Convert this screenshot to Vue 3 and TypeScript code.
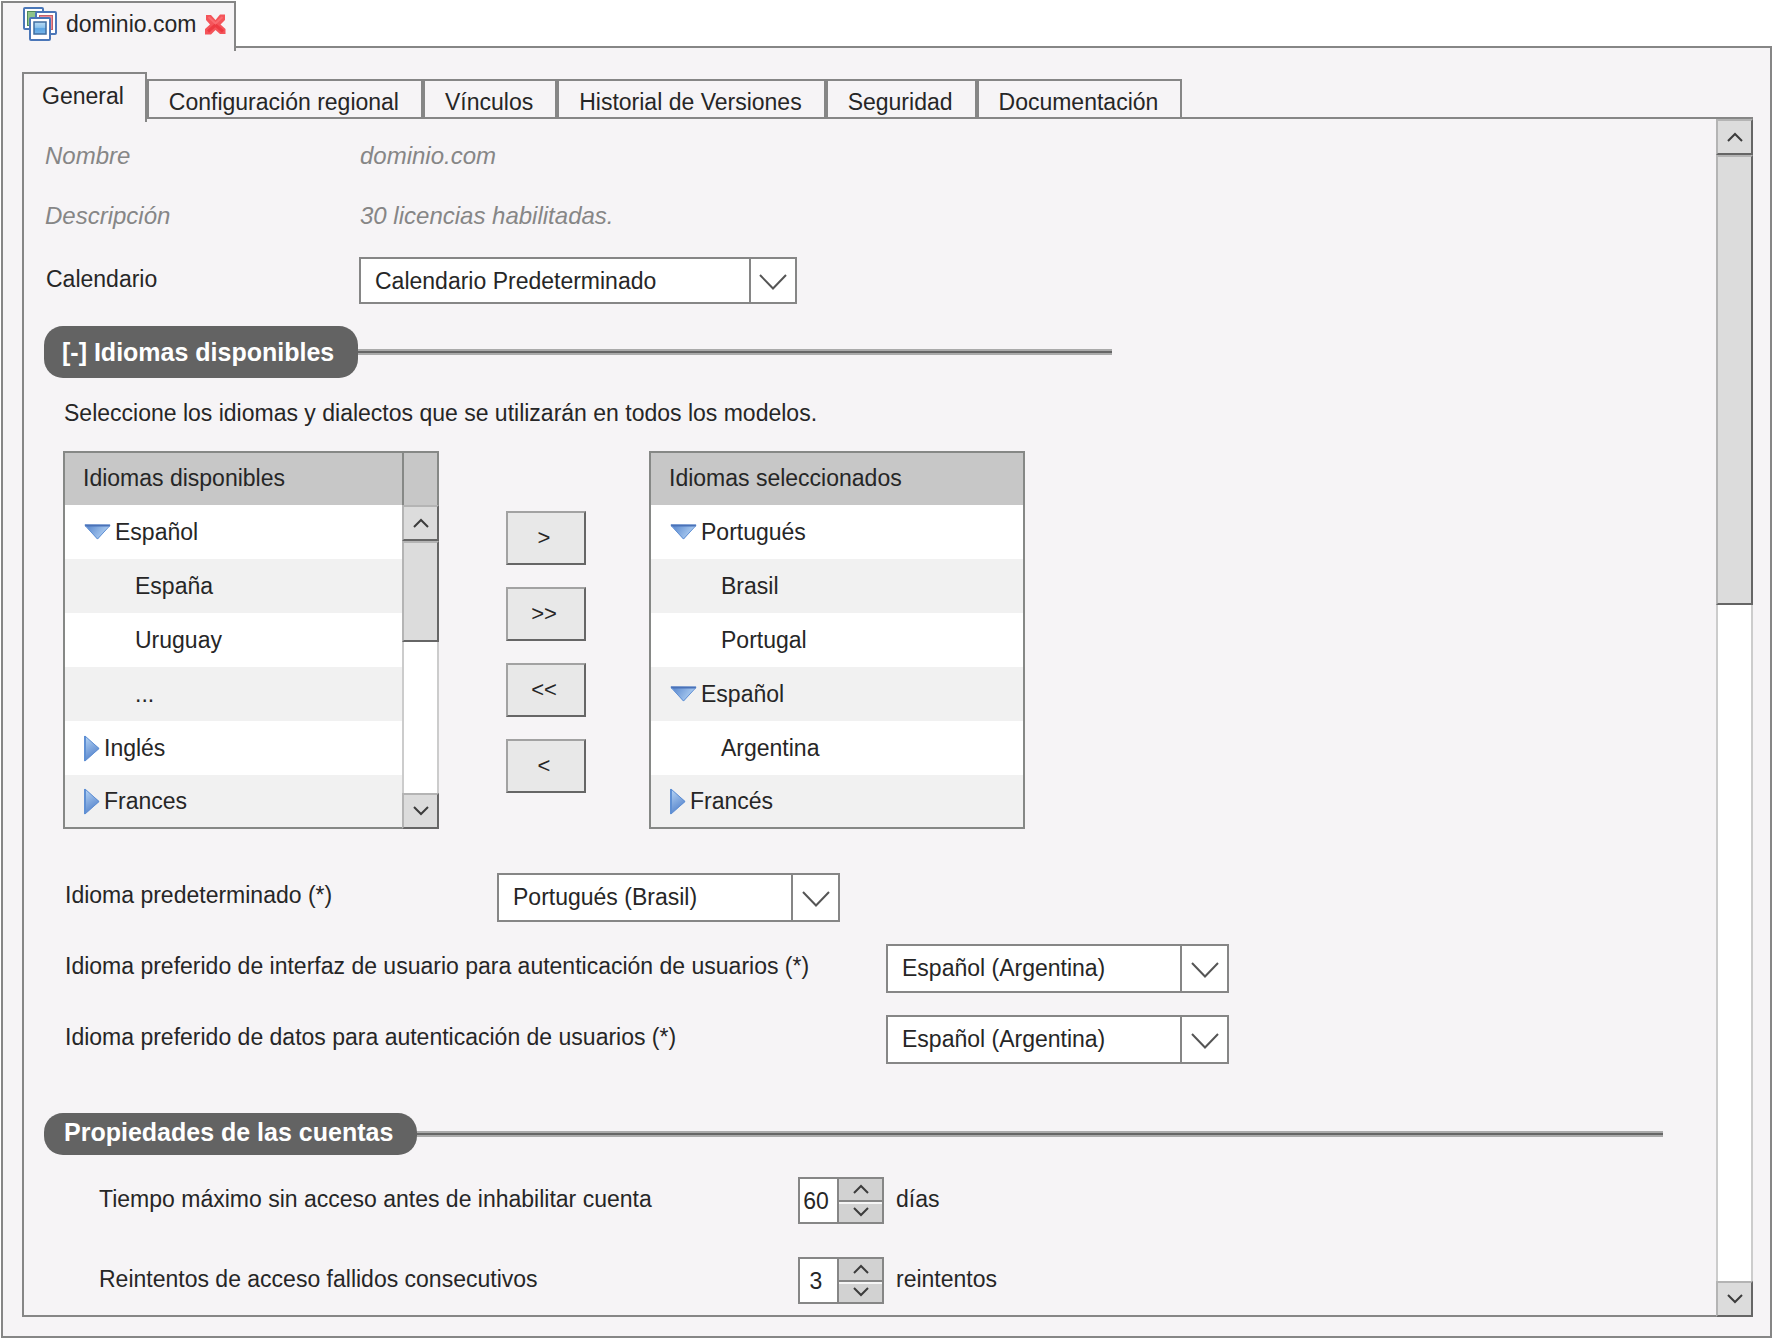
<script setup lang="ts">
import { ref } from 'vue'

interface LanguageRow {
  label: string
  kind: 'open' | 'closed' | 'child'
}

const tabs = [
  'General',
  'Configuración regional',
  'Vínculos',
  'Historial de Versiones',
  'Seguridad',
  'Documentación',
]
const activeTab = ref('General')

const available: LanguageRow[] = [
  { label: 'Español', kind: 'open' },
  { label: 'España', kind: 'child' },
  { label: 'Uruguay', kind: 'child' },
  { label: '...', kind: 'child' },
  { label: 'Inglés', kind: 'closed' },
  { label: 'Frances', kind: 'closed' },
]
const selected: LanguageRow[] = [
  { label: 'Portugués', kind: 'open' },
  { label: 'Brasil', kind: 'child' },
  { label: 'Portugal', kind: 'child' },
  { label: 'Español', kind: 'open' },
  { label: 'Argentina', kind: 'child' },
  { label: 'Francés', kind: 'closed' },
]
const lists = [
  { title: 'Idiomas disponibles', rows: available, scroll: true },
  { title: 'Idiomas seleccionados', rows: selected, scroll: false },
]
const moves = ['>', '>>', '<<', '<']

const languageFields = [
  { id: 'lang-default', label: 'Idioma predeterminado (*)', value: 'Portugués (Brasil)', wide: false },
  {
    id: 'lang-ui',
    label: 'Idioma preferido de interfaz de usuario para autenticación de usuarios (*)',
    value: 'Español (Argentina)',
    wide: true,
  },
  {
    id: 'lang-data',
    label: 'Idioma preferido de datos para autenticación de usuarios (*)',
    value: 'Español (Argentina)',
    wide: true,
  },
]

const limits = ref([
  { id: 'max-days', label: 'Tiempo máximo sin acceso antes de inhabilitar cuenta', value: 60, unit: 'días' },
  { id: 'max-tries', label: 'Reintentos de acceso fallidos consecutivos', value: 3, unit: 'reintentos' },
])
</script>

<template>
  <div class="window">
    <svg class="defs" width="0" height="0" aria-hidden="true">
      <defs>
        <linearGradient id="tri-down" x1="0" y1="0" x2="1" y2="0.4">
          <stop offset="0" stop-color="#4f7fca" />
          <stop offset="1" stop-color="#b4d3f4" />
        </linearGradient>
        <linearGradient id="tri-right" x1="0.2" y1="0" x2="0.6" y2="1">
          <stop offset="0" stop-color="#b4d3f4" />
          <stop offset="1" stop-color="#4c7cc8" />
        </linearGradient>
        <linearGradient id="pane-blue" x1="0" y1="0" x2="0" y2="1">
          <stop offset="0" stop-color="#b9dcf4" />
          <stop offset="0.45" stop-color="#8cc4ee" />
          <stop offset="0.55" stop-color="#5aa4e2" />
          <stop offset="1" stop-color="#78b6ea" />
        </linearGradient>
      </defs>
    </svg>

    <header class="doc-strip">
      <div class="doc-tab">
        <svg width="34" height="34" viewBox="0 0 34 34" aria-hidden="true">
          <rect x="1" y="1" width="19" height="21" rx="1" fill="#fff" stroke="#4a76b8" stroke-width="2" />
          <rect x="4.500" y="4.500" width="13" height="14" fill="#8fc48a" stroke="#4f8a5a" />
          <rect x="13" y="5" width="20" height="22" rx="1" fill="#fff" stroke="#4a76b8" stroke-width="2" />
          <rect x="16.500" y="8.500" width="13" height="14" fill="#f08a90" stroke="#c0606c" />
          <rect x="7" y="11" width="20" height="22" rx="1" fill="#fff" stroke="#4a76b8" stroke-width="2" />
          <rect x="11" y="15" width="12" height="12" fill="url(#pane-blue)" stroke="#3f6ea0" stroke-width="1.500" />
        </svg>
        <span>dominio.com</span>
        <button class="close" type="button" aria-label="Cerrar">
          <svg width="21" height="21" viewBox="0 0 21 21" aria-hidden="true">
            <path
              d="M1 1H6L10.500 6 15 .5H20V6L15.500 10.500 20.500 15V20H15L10.500 16 6 20.500H0V15L5 10.500 1 6Z"
              fill="#f4545a"
            />
            <path d="M3 17.500 10.500 11 18 17.500" fill="none" stroke="#ee3a42" stroke-width="3" />
            <path d="M3.500 3 10.500 9.500 17.500 3" fill="none" stroke="#fa6b70" stroke-width="2" />
          </svg>
        </button>
      </div>
    </header>

    <main class="frame">
      <nav class="tabs">
        <button
          v-for="tab in tabs"
          :key="tab"
          type="button"
          class="tab"
          :class="{ active: tab === activeTab }"
          @click="activeTab = tab"
        >
          {{ tab }}
        </button>
      </nav>

      <div class="panel">
        <div class="content">
          <dl class="facts">
            <dt>Nombre</dt>
            <dd>dominio.com</dd>
            <dt>Descripción</dt>
            <dd>30 licencias habilitadas.</dd>
          </dl>

          <div class="field calendar">
            <label for="calendar">Calendario</label>
            <div class="combo">
              <select id="calendar">
                <option>Calendario Predeterminado</option>
              </select>
              <span class="caret">
                <svg width="28" height="16" viewBox="0 0 28 16"><path d="M1 1 14 14.500 27 1" /></svg>
              </span>
            </div>
          </div>

          <div class="section languages-title">
            <h2>[-] Idiomas disponibles</h2>
            <span class="rule"></span>
          </div>

          <p class="hint">Seleccione los idiomas y dialectos que se utilizarán en todos los modelos.</p>

          <div class="picker">
            <template v-for="(list, index) in lists" :key="list.title">
              <div class="list" :class="{ scrolls: list.scroll }">
                <table>
                  <thead>
                    <tr>
                      <th scope="col">{{ list.title }}</th>
                    </tr>
                  </thead>
                  <tbody>
                    <tr v-for="(row, i) in list.rows" :key="i">
                      <td :class="row.kind">
                        <div class="cell">
                          <svg v-if="row.kind === 'open'" width="27" height="16" viewBox="0 0 27 16">
                            <path d="M.5 .5H26.500L13.500 15.500Z" fill="url(#tri-down)" />
                            <path d="M1 1.500H26" stroke="#4a72b8" stroke-width="2" />
                            <path d="M1 1.500 13.500 15 26 1.500" fill="none" stroke="#5f8fd4" />
                          </svg>
                          <svg v-else-if="row.kind === 'closed'" width="16" height="27" viewBox="0 0 16 27">
                            <path d="M.5 .5V26.500L15.500 13.500Z" fill="url(#tri-right)" />
                            <path d="M1 1V26" stroke="#5f90d4" stroke-width="2" />
                            <path d="M1 26 15 13.500 1 1" fill="none" stroke="#5f8fd4" />
                          </svg>
                          <span>{{ row.label }}</span>
                        </div>
                      </td>
                    </tr>
                  </tbody>
                </table>
                <div v-if="list.scroll" class="scroll-column">
                  <div class="scroll-head"></div>
                  <div class="scrollbar">
                    <button type="button" aria-label="Subir">
                      <svg width="16" height="10" viewBox="0 0 16 10"><path d="M1 9 8 2 15 9" /></svg>
                    </button>
                    <div class="thumb"></div>
                    <div class="track"></div>
                    <button type="button" aria-label="Bajar">
                      <svg width="16" height="10" viewBox="0 0 16 10"><path d="M1 1 8 8 15 1" /></svg>
                    </button>
                  </div>
                </div>
              </div>
              <div v-if="index === 0" class="moves">
                <button v-for="move in moves" :key="move" type="button">{{ move }}</button>
              </div>
            </template>
          </div>

          <div class="language-fields">
            <div v-for="field in languageFields" :key="field.id" class="field" :class="{ wide: field.wide }">
              <label :for="field.id">{{ field.label }}</label>
              <div class="combo">
                <select :id="field.id">
                  <option>{{ field.value }}</option>
                </select>
                <span class="caret">
                  <svg width="28" height="16" viewBox="0 0 28 16"><path d="M1 1 14 14.500 27 1" /></svg>
                </span>
              </div>
            </div>
          </div>

          <div class="section accounts-title">
            <h2>Propiedades de las cuentas</h2>
            <span class="rule"></span>
          </div>

          <div class="limits">
            <div v-for="limit in limits" :key="limit.id" class="limit">
              <label :for="limit.id">{{ limit.label }}</label>
              <div class="spinner">
                <input :id="limit.id" v-model.number="limit.value" type="number" />
                <div class="steps">
                  <button type="button" aria-label="Aumentar" @click="limit.value++">
                    <svg width="16" height="10" viewBox="0 0 16 10"><path d="M1 9 8 2 15 9" /></svg>
                  </button>
                  <button type="button" aria-label="Disminuir" @click="limit.value--">
                    <svg width="16" height="10" viewBox="0 0 16 10"><path d="M1 1 8 8 15 1" /></svg>
                  </button>
                </div>
              </div>
              <span class="unit">{{ limit.unit }}</span>
            </div>
          </div>
        </div>

        <div class="scrollbar">
          <button type="button" aria-label="Subir">
            <svg width="16" height="10" viewBox="0 0 16 10"><path d="M1 9 8 2 15 9" /></svg>
          </button>
          <div class="thumb"></div>
          <div class="track"></div>
          <button type="button" aria-label="Bajar">
            <svg width="16" height="10" viewBox="0 0 16 10"><path d="M1 1 8 8 15 1" /></svg>
          </button>
        </div>
      </div>
    </main>
  </div>
</template>

<style>
body {
  margin: 0;
  background: #fff;
}
</style>

<style scoped>
.window,
.window * {
  box-sizing: border-box;
}

.window {
  padding: 1px 0 1px 1px;
  font-family: 'Liberation Sans', Arial, sans-serif;
  font-size: 23px;
  line-height: 28px;
  color: #262626;
}

button,
select,
input {
  margin: 0;
  padding: 0;
  border: 0;
  border-radius: 0;
  background: none;
  font: inherit;
  color: inherit;
}

svg {
  display: block;
  flex: none;
}

.defs {
  position: absolute;
}

/* Document tab */
.doc-strip {
  display: flex;
  height: 45px;
}

.doc-tab {
  position: relative;
  z-index: 1;
  display: flex;
  align-items: center;
  gap: 9px;
  height: 50px;
  padding: 0 8px 6px 20px;
  border: 2px solid #868686;
  border-bottom: 0;
  background: #f6f4f6;
}

.frame {
  padding: 24px 17px 19px 19px;
  border: 2px solid #868686;
  background: #f6f4f6;
}

/* Inner tabs */
.tabs {
  display: flex;
  align-items: flex-end;
  height: 47px;
}

.tab {
  height: 40px;
  padding: 6px 22px 0 20px;
  border: 2px solid #868686;
  white-space: nowrap;
}

.tab.active {
  position: relative;
  z-index: 1;
  height: 50px;
  margin-bottom: -3px;
  padding: 0 21px 4px 18px;
  border-bottom: 0;
  background: #f6f4f6;
}

.panel {
  display: flex;
  margin-top: -2px;
  border-top: 2px solid #868686;
}

.content {
  flex: 1;
  min-width: 0;
  padding: 23px 53px 11px 20px;
  border: solid #868686;
  border-width: 0 0 2px 2px;
}

/* Scrollbars */
.scrollbar {
  display: grid;
  flex: none;
  grid-template-rows: 36px 2fr 3fr 36px;
  width: 37px;
}

.scrollbar button,
.thumb {
  border: 2px solid;
  border-color: #b4b4b4 #666 #666 #b4b4b4;
  background: #dcdcdc;
}

.scrollbar button {
  display: flex;
  align-items: center;
  justify-content: center;
}

.scrollbar path,
.steps path {
  fill: none;
  stroke: #3c3c3c;
  stroke-width: 2;
}

.track {
  border: solid #ccc;
  border-width: 0 2px;
  background: #fff;
}

/* Read-only facts */
.facts {
  display: grid;
  grid-template-columns: 315px 1fr;
  row-gap: 32px;
  margin: 0 0 27px;
  font-size: 24px;
  font-style: italic;
  color: #868686;
}

.facts dt,
.facts dd {
  margin: 0;
  padding-left: 1px;
}

/* Drop-down fields */
.field {
  display: flex;
  align-items: center;
}

.field label {
  flex: none;
  padding-bottom: 4px;
}

.calendar label {
  width: 315px;
  padding-left: 2px;
}

.combo {
  position: relative;
  width: 343px;
  height: 49px;
}

.calendar .combo {
  width: 438px;
  height: 47px;
}

.combo select {
  width: 100%;
  height: 100%;
  padding: 0 60px 0 14px;
  border: 2px solid #868686;
  background: #fff;
  appearance: none;
}

.caret {
  position: absolute;
  inset: 2px 2px 2px auto;
  display: flex;
  align-items: center;
  justify-content: center;
  width: 46px;
  padding-top: 3px;
  border-left: 2px solid #868686;
  pointer-events: none;
}

.caret path {
  fill: none;
  stroke: #555;
  stroke-width: 2;
}

/* Section titles */
.section {
  display: flex;
  align-items: center;
}

.section h2 {
  flex: none;
  margin: 0;
  border-radius: 19px;
  background: #636363;
  font-size: 25px;
  font-weight: bold;
  color: #fff;
}

.rule {
  flex: 1;
  height: 6px;
  border: 2px solid #aaa;
  border-width: 2px 0;
  background: #666;
}

.languages-title {
  max-width: 1068px;
  margin-top: 22px;
}

.languages-title h2 {
  padding: 12px 24px 12px 18px;
}

.accounts-title {
  margin-top: 49px;
}

.accounts-title h2 {
  padding: 5px 24px 9px 20px;
}

.hint {
  margin: 21px 0 24px 20px;
}

/* Language picker */
.picker {
  display: flex;
  align-items: flex-start;
  margin-left: 19px;
}

.list {
  flex: none;
  display: flex;
  width: 376px;
  height: 378px;
  border: 2px solid #868886;
  overflow: hidden;
}

.list.scrolls {
  border-width: 0;
}

.list table {
  flex: 1;
  border-spacing: 0;
  align-self: flex-start;
}

.list.scrolls table {
  height: 378px;
  border: solid #868886;
  border-width: 2px 0 2px 2px;
}

.list th {
  height: 52px;
  padding: 0 0 2px 18px;
  background: #c7c7c7;
  font-weight: normal;
  text-align: left;
}

.list td {
  height: 54px;
  padding: 0 0 0 19px;
  background: #fff;
}

.list tr:nth-child(even) td {
  background: #f1f1f1;
}

.list tr:last-child td {
  height: 52px;
}

.list td.child {
  padding-left: 70px;
}

.cell {
  display: flex;
  align-items: center;
  gap: 4px;
}

.scroll-column {
  display: flex;
  flex-direction: column;
  width: 37px;
}

.scroll-head {
  height: 54px;
  border: 2px solid #868886;
  border-bottom: 0;
  background: #c7c7c7;
}

.scroll-column .scrollbar {
  flex: 1;
}

.moves {
  display: flex;
  flex-direction: column;
  gap: 22px;
  margin: 60px 63px 0 67px;
}

.moves button {
  width: 80px;
  height: 54px;
  padding-right: 4px;
  border: 2px solid;
  border-color: #a2a2a2 #666 #666 #a2a2a2;
  background: #e8e8e8;
  font-size: 22px;
}

.language-fields {
  display: flex;
  flex-direction: column;
  gap: 22px;
  margin: 44px 0 0 21px;
}

.language-fields label {
  width: 432px;
  padding-bottom: 6px;
}

.language-fields select {
  padding-bottom: 2px;
}

.language-fields .caret {
  width: 47px;
}

.language-fields .wide label {
  width: 821px;
}

/* Account limits */
.limits {
  display: flex;
  flex-direction: column;
  gap: 33px;
  margin: 22px 0 0 55px;
}

.limit {
  display: flex;
  align-items: center;
}

.limit label {
  width: 699px;
  padding-bottom: 3px;
}

.spinner {
  display: flex;
  width: 86px;
  height: 47px;
  border: 2px solid #868686;
  background: #fff;
}

.spinner input {
  width: 37px;
  padding-right: 5px;
  text-align: center;
  appearance: textfield;
}

.spinner input::-webkit-inner-spin-button {
  appearance: none;
  margin: 0;
}

.steps {
  flex: 1;
  display: flex;
  flex-direction: column;
  border-left: 2px solid #868686;
}

.steps button {
  flex: 1;
  display: flex;
  align-items: center;
  justify-content: center;
  background: #d2d2d2;
}

.steps button + button {
  border-top: 2px solid #868686;
  box-shadow: inset 0 2px 0 #f6f6f6;
}

.unit {
  padding: 0 0 3px 12px;
}
</style>
